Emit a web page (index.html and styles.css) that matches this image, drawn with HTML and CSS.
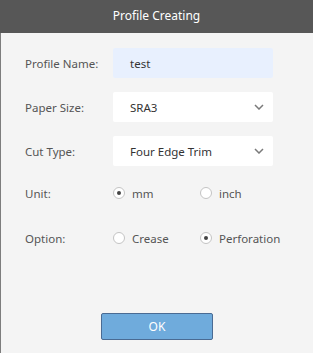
FILE: index.html
```html
<!DOCTYPE html>
<html lang="en">
<head>
    <meta charset="UTF-8">
    <meta name="viewport" content="width=device-width, initial-scale=1.0">
    <title>Profile Creating</title>
    <link rel="stylesheet" href="styles.css">
</head>
<body>

    <div class="dialog">
        <div class="dialog-header">Profile Creating</div>

        <div class="dialog-body">
            <div class="row">
                <span class="label">Profile Name:</span>
                <div class="field field-filled">test</div>
            </div>

            <div class="row">
                <span class="label">Paper Size:</span>
                <div class="field">
                    <span>SRA3</span>
                    <svg class="chevron" width="10" height="6" viewBox="0 0 10 6">
                        <path d="M1 1 L5 5 L9 1" fill="none" stroke="#7a7a7a" stroke-width="1.5"/>
                    </svg>
                </div>
            </div>

            <div class="row">
                <span class="label">Cut Type:</span>
                <div class="field">
                    <span>Four Edge Trim</span>
                    <svg class="chevron" width="10" height="6" viewBox="0 0 10 6">
                        <path d="M1 1 L5 5 L9 1" fill="none" stroke="#7a7a7a" stroke-width="1.5"/>
                    </svg>
                </div>
            </div>

            <div class="row row-radio row-unit">
                <span class="label">Unit:</span>
                <div class="radio-group">
                    <span class="radio checked"><i></i>mm</span>
                    <span class="radio"><i></i>inch</span>
                </div>
            </div>

            <div class="row row-radio row-option">
                <span class="label">Option:</span>
                <div class="radio-group">
                    <span class="radio"><i></i>Crease</span>
                    <span class="radio checked"><i></i>Perforation</span>
                </div>
            </div>

            <div class="button-container">
                <button class="button">OK</button>
            </div>
        </div>
    </div>

</body>
</html>
```

FILE: styles.css
```css
body {
    margin: 0;
    padding: 0;
    font-family: "Noto Sans", "Open Sans", sans-serif;
    background-color: #f4f4f4;
}
.dialog {
    width: 313px;
    height: 353px;
    box-sizing: border-box;
    border-left: 1px solid #7d7d7d;
    background: #f4f4f4;
    display: flex;
    flex-direction: column;
}
.dialog-header {
    height: 33px;
    line-height: 32px;
    background-color: #575757;
    color: #fff;
    text-align: center;
    font-size: 12px;
    margin-left: -1px;
}
.dialog-body {
    flex: 1;
    display: flex;
    flex-direction: column;
    padding: 15px 0 0 24px;
}
.row {
    display: flex;
    align-items: center;
    height: 30px;
    margin-bottom: 14px;
}
.row-unit {
    height: 26px;
    margin-bottom: 19px;
}
.row-option {
    height: 26px;
    margin-bottom: 0;
}
.label {
    width: 88px;
    font-size: 11.5px;
    color: #555;
}
.field {
    width: 160px;
    height: 30px;
    box-sizing: border-box;
    padding: 0 9px 0 17px;
    background: #fff;
    border-radius: 2px;
    display: flex;
    align-items: center;
    justify-content: space-between;
    font-size: 11.5px;
    color: #333;
}
.field-filled {
    background: #e8f0fe;
}
.radio-group {
    display: flex;
}
.radio {
    width: 87px;
    display: flex;
    align-items: center;
    font-size: 11.5px;
    color: #555;
}
.radio i {
    width: 12px;
    height: 12px;
    box-sizing: border-box;
    border: 1px solid #c4c4c4;
    border-radius: 50%;
    background: #fff;
    margin-right: 7px;
    display: flex;
    align-items: center;
    justify-content: center;
}
.radio.checked i::after {
    content: "";
    width: 4px;
    height: 4px;
    border-radius: 50%;
    background: #444;
}
.button-container {
    margin-top: auto;
    margin-bottom: 13px;
    margin-left: -24px;
    display: flex;
    justify-content: center;
}
.button {
    width: 112px;
    height: 27px;
    background-color: #6fabdc;
    border: 1px solid #4a6b93;
    border-radius: 2px;
    color: #fff;
    font-family: inherit;
    font-size: 12px;
    cursor: pointer;
}
```
